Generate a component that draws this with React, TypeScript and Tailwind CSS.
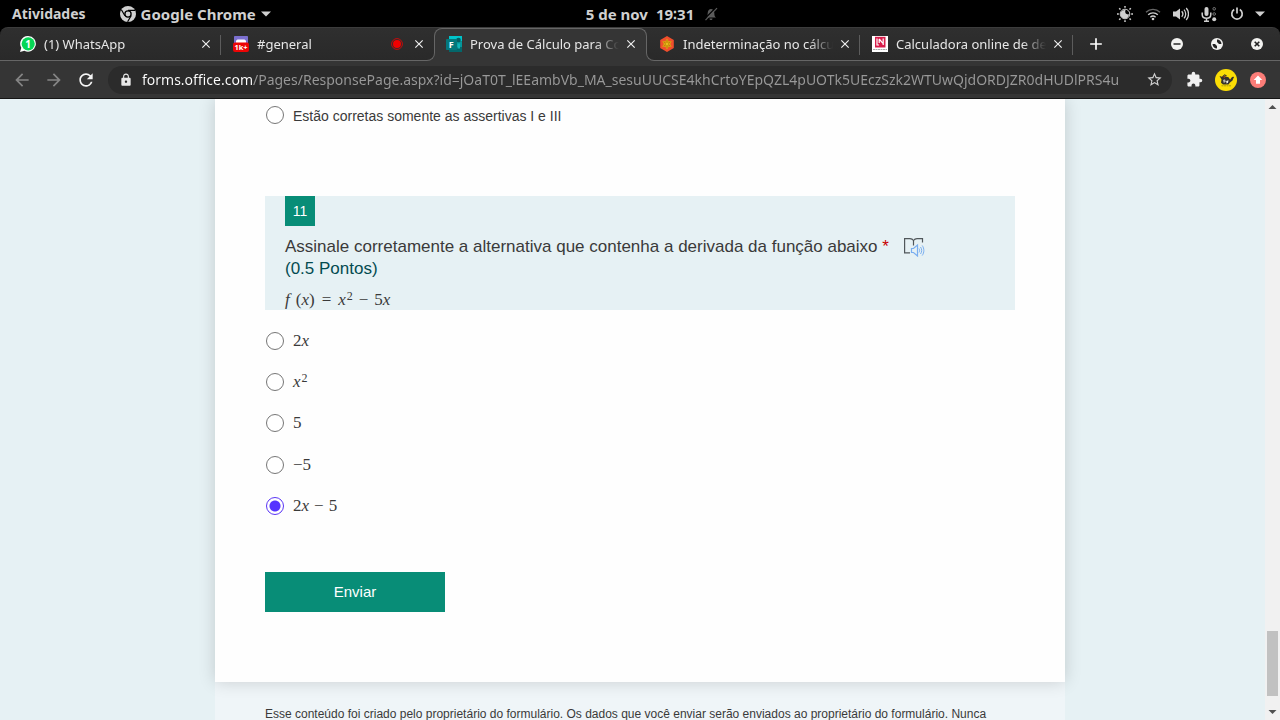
import React, { useState } from "react";
import {
  MdAdd,
  MdArrowBack,
  MdArrowForward,
  MdClose,
  MdExtension,
  MdLock,
  MdRefresh,
  MdStarBorder,
} from "react-icons/md";

const URL_TEXT =
  "forms.office.com/Pages/ResponsePage.aspx?id=jOaT0T_lEEambVb_MA_sesuUUCSE4khCrtoYEpQZL4pUOTk5UEczSzk2WTUwQjdORDJZR0dHUDlPRS4u";

function ChromeLogo() {
  return (
    <svg width="16" height="16" viewBox="0 0 16 16" aria-hidden="true">
      <circle cx="8" cy="8" r="8" fill="#d0d0d0" />
      <circle cx="8" cy="8" r="3.1" fill="#d0d0d0" stroke="#000" strokeWidth="1.3" />
      <path d="M8 4.4H15M4.9 9.8 1.4 3.8M11.1 9.8 7.6 15.8" stroke="#000" strokeWidth="1.2" fill="none" />
    </svg>
  );
}

function Caret() {
  return (
    <svg width="10" height="6" viewBox="0 0 10 6" aria-hidden="true">
      <path d="M0 0.5h10L5 5.5z" fill="#d0d0d0" />
    </svg>
  );
}

function BellOff() {
  return (
    <svg width="14" height="14" viewBox="0 0 14 14" aria-hidden="true">
      <path d="M2 10.5c1.5-1 1.6-2.5 1.7-4.5C3.9 3.5 5.3 2 7 2s3.2 1.5 3.3 4c.1 2 .2 3.5 1.7 4.500zM5.500 11.500h3c0 2-3 2-3 0z" fill="#5c5c5c" />
      <path d="M12.5 0 0 12.5" stroke="#000" strokeWidth="1.3" />
      <path d="M13 1.2 1.5 13.2" stroke="#5c5c5c" strokeWidth="1.2" />
    </svg>
  );
}

function NightLight() {
  return (
    <svg width="16" height="16" viewBox="0 0 16 16" fill="none" stroke="#d0d0d0" aria-hidden="true">
      <circle cx="8" cy="8" r="4.8" strokeWidth="1" />
      <path d="M8.500 4C7.500 7 9 8.800 12 8.300A4.300 4.300 0 1 1 8.500 4z" fill="#d0d0d0" stroke="none" />
      <path d="M8 0v1.800M8 14.200v1.800M0 8h1.800M14.200 8h1.800M2.200 2.200l1.300 1.300M12.500 12.500l1.300 1.300M2.200 13.800l1.300-1.300M12.500 3.500l1.300-1.300" strokeWidth="1.500" />
    </svg>
  );
}

function Wifi() {
  return (
    <svg width="16" height="16" viewBox="0 0 16 16" fill="none" aria-hidden="true">
      <path d="M1 6.200a10 10 0 0 1 14 0" stroke="#666" strokeWidth="1.300" />
      <path d="M3.200 8.800a7 7 0 0 1 9.600 0M5.400 11.200a4 4 0 0 1 5.200 0" stroke="#d0d0d0" strokeWidth="1.400" />
      <circle cx="8" cy="13" r="1.300" fill="#d0d0d0" />
    </svg>
  );
}

function Volume() {
  return (
    <svg width="16" height="16" viewBox="0 0 16 16" fill="none" aria-hidden="true">
      <path d="M0 5.500h3L7 2.500v11l-4-3H0z" fill="#d0d0d0" />
      <path d="M8.700 5.300a4 4 0 0 1 0 5.400M11 3.600a6.500 6.500 0 0 1 0 8.800M13.200 2a9 9 0 0 1 0 12" stroke="#d0d0d0" strokeWidth="1.300" />
    </svg>
  );
}

function Mic() {
  return (
    <svg width="16" height="16" viewBox="0 0 16 16" fill="none" stroke="#d0d0d0" aria-hidden="true">
      <rect x="3.500" y="1" width="4" height="9" rx="2" fill="#d0d0d0" stroke="none" />
      <path d="M1.200 6.500v2c0 5 8.600 5 8.600 0v-2M5.500 12v3M3 15.200h5" strokeWidth="1.500" />
      <circle cx="13.200" cy="2.800" r="1.300" stroke="#777" />
      <circle cx="13.200" cy="8" r="1.300" stroke="#777" />
      <circle cx="13.200" cy="13.200" r="2" fill="#d0d0d0" stroke="none" />
    </svg>
  );
}

function Power() {
  return (
    <svg width="16" height="16" viewBox="0 0 16 16" fill="none" stroke="#d0d0d0" strokeWidth="1.700" aria-hidden="true">
      <path d="M5.200 3.500a5.200 5.200 0 1 0 5.600 0M8 1.500v6" />
    </svg>
  );
}

function WhatsAppIcon() {
  return (
    <svg width="16" height="16" viewBox="0 0 16 16" aria-hidden="true">
      <path d="M8.200 0a7.800 7.800 0 1 1-3.800 14.700L0 16l1.300-4.200A7.800 7.800 0 0 1 8.200 0z" fill="#fff" />
      <circle cx="8.200" cy="7.800" r="6.600" fill="#06d755" />
      <text x="8" y="11.500" textAnchor="middle" fontSize="10" fontWeight="700" fontFamily="Noto Sans, sans-serif" fill="#fff">1</text>
    </svg>
  );
}

function ChannelIcon() {
  return (
    <svg width="16" height="16" viewBox="0 0 16 16" aria-hidden="true">
      <rect x="1" y="0" width="14" height="12" rx="0.800" fill="#7b6fce" />
      <path d="M3 7V4.800L4.500 3.500h7L13 4.800V7z" fill="#fff" />
      <rect x="0" y="6.500" width="16" height="9.500" rx="2" fill="#ec0505" />
      <text x="8" y="14" textAnchor="middle" fontSize="7.500" fontWeight="700" fontFamily="Noto Sans, sans-serif" fill="#fff">1k+</text>
    </svg>
  );
}

function FormsIcon() {
  return (
    <svg width="16" height="16" viewBox="0 0 16 16" aria-hidden="true">
      <path d="M3 0h13v5.500H3z" fill="#00c4ca" />
      <path d="M3 5.500h13V11H3z" fill="#03979b" />
      <path d="M3 11h13v5H3z" fill="#04676b" />
      <circle cx="12.500" cy="4" r="2.300" fill="#075d61" />
      <path d="M11.500 7.500H14v5h-2.500z" fill="#10b5b8" />
      <rect x="0" y="3" width="11" height="11" rx="0.800" fill="#03787c" />
      <text x="5.300" y="11.700" textAnchor="middle" fontSize="9" fontWeight="700" fontFamily="Noto Sans, sans-serif" fill="#fff">F</text>
    </svg>
  );
}

function HexIcon() {
  return (
    <svg width="16" height="16" viewBox="0 0 16 16" aria-hidden="true">
      <path d="M8 0l6.800 4v8L8 16l-6.800-4V4z" fill="#f04e2c" />
      <path d="M8 2.500l1.600 2.700 3.200 0L11.200 8l1.600 2.800H9.600L8 13.500l-1.600-2.700H3.200L4.800 8 3.200 5.200h3.200z" fill="#dba512" />
      <path d="M8 4v8M4.700 6l6.600 4M11.300 6l-6.600 4" stroke="#b97a08" strokeWidth="0.800" />
      <circle cx="8" cy="8" r="1.200" fill="#e6be1c" />
    </svg>
  );
}

function CalculatorIcon() {
  return (
    <svg width="16" height="16" viewBox="0 0 16 16" aria-hidden="true">
      <path d="M0 0h16v16H0z" fill="#fff" />
      <path d="M3 0.800h10.500v10.700H3z" fill="#d81d4b" />
      <path d="M5 2.500v6.500h2M7.200 3l3.500 4.200M7.200 3v4M11.200 2.500v6.500" fill="none" stroke="#fff" strokeWidth="1.200" />
      <path d="M1 13.500h14" stroke="#aaa" strokeWidth="1" strokeDasharray="2 0.500" />
    </svg>
  );
}

function AvatarIcon() {
  return (
    <svg width="22" height="22" viewBox="0 0 22 22" aria-hidden="true">
      <circle cx="11" cy="11" r="11" fill="#fbdd05" />
      <path d="M4.500 7l2.500.8L8.500 6l2 1.500 3 .8 1.500 2.200 4-2.700-1.500 3.700-2.500 2-1.500 2H8L6 13.800l.5-3.300z" fill="#35322c" />
      <path d="M9 5.800l2.500 1M16 9.800l2.500-1.800" stroke="#35322c" strokeWidth="1.200" />
      <path d="M8 11l2-.8.8 2.600-2 1.200z" fill="#b5b2a8" />
      <path d="M11.200 12l2.300-.8-.5 2.600-1.500.6z" fill="#efefe8" />
      <path d="M8.500 7.800l1.500.4" stroke="#d8431c" />
      <path d="M6.500 16.800h10" stroke="#a39410" strokeWidth="0.900" strokeDasharray="2 0.500" />
    </svg>
  );
}

function UpdateIcon() {
  return (
    <svg width="16" height="16" viewBox="0 0 16 16" aria-hidden="true">
      <circle cx="8" cy="8" r="8" fill="#fb7d78" />
      <path d="M8 3.500l4.300 4.500H10v3.700H6V8H3.700z" fill="#fff" />
    </svg>
  );
}

function ReaderIcon() {
  return (
    <svg width="21" height="19" viewBox="0 0 21 19" fill="none" aria-hidden="true">
      <path d="M9.500 7.500V2.500C8.500 1 7.500.6 6 .6H.6v14.200H6M9.500 2.500C10.500 1 11.500.6 13 .6h5.500v4" stroke="#50575a" strokeWidth="1.200" />
      <path d="M7.500 10.500h2l4-3.500v11l-4-3.500h-2z" stroke="#79aef0" strokeWidth="1.200" />
      <path d="M15 10.500c.8 1.200.8 2.800 0 4M16.500 9c1.600 2.200 1.600 4.800 0 7M18.200 7.500c2.200 3 2.200 7 0 10" stroke="#79aef0" strokeWidth="1" />
    </svg>
  );
}

type TabProps = { icon: React.ReactNode; title: string; active?: boolean; divider?: boolean; recording?: boolean };

function BrowserTab({ icon, title, active, divider, recording }: TabProps) {
  return (
    <div
      className={
        active
          ? "relative z-10 flex min-w-0 flex-[0_1_213px] items-center rounded-t-lg border border-b-0 border-[#666] bg-[#353535] pr-[7px] pb-[2px] pl-[11px]"
          : "relative flex min-w-0 flex-[0_1_213px] items-center border-b border-[#666] pr-[7px] pl-3"
      }
    >
      {active && (
        <>
          <span className="absolute bottom-0 -left-2 h-2 w-2 bg-[#353535]">
            <span className="block h-2 w-2 rounded-br-lg border-r border-b border-[#666] bg-[#2a2a2a]" />
          </span>
          <span className="absolute -right-2 bottom-0 h-2 w-2 bg-[#353535]">
            <span className="block h-2 w-2 rounded-bl-lg border-b border-l border-[#666] bg-[#2a2a2a]" />
          </span>
        </>
      )}
      <button type="button" className="flex min-w-0 flex-1 items-center gap-2 text-left">
        <span className="shrink-0">{icon}</span>
        <span className="mr-1 min-w-0 flex-1 overflow-hidden text-[13px] leading-5 whitespace-nowrap text-[#e6e6e6] [mask-image:linear-gradient(to_right,black_84%,transparent)]">
          {title}
        </span>
      </button>
      {recording && (
        <svg width="12" height="12" viewBox="0 0 12 12" className="mr-2 shrink-0" aria-hidden="true">
          <circle cx="6" cy="6" r="5.400" fill="none" stroke="#c80a0a" strokeWidth="1" />
          <circle cx="6" cy="6" r="4" fill="#f00000" />
        </svg>
      )}
      <button type="button" aria-label={"Fechar " + title} className="flex h-4 w-4 shrink-0 items-center justify-center text-[#f0f0f0]">
        <MdClose size={14} />
      </button>
      {divider && <span className="absolute top-[7px] right-0 h-5 w-px bg-[#5c5c5c]" />}
    </div>
  );
}

const V = ({ children }: { children: React.ReactNode }) => <i>{children}</i>;
const Sup = ({ children }: { children: React.ReactNode }) => (
  <span className="ml-px self-start text-xs leading-3">{children}</span>
);

const OPTIONS: { id: string; label: React.ReactNode }[] = [
  { id: "2x", label: <>2<V>x</V></> },
  { id: "x2", label: <><V>x</V><Sup>2</Sup></> },
  { id: "5", label: <>5</> },
  { id: "-5", label: <>−5</> },
  { id: "2x-5", label: <>2<V>x</V><span className="mx-[5px]">−</span>5</> },
];

const radioClass =
  "m-0 h-[18px] w-[18px] shrink-0 appearance-none rounded-full border border-[#767676] bg-white checked:border-[#5a35f5] checked:bg-[radial-gradient(circle,#5533ff_5px,#ffffff_6px)]";

export default function App() {
  const [answer, setAnswer] = useState("2x-5");
  return (
    <div className="flex h-screen flex-col overflow-hidden bg-black font-['Noto_Sans',sans-serif]">
      <header className="grid h-[27px] shrink-0 grid-cols-[1fr_auto_1fr] items-center text-[15px] leading-5 font-bold text-[#d0d0d0]">
        <div className="flex items-center pl-3">
          <button type="button" className="text-sm">Atividades</button>
          <button type="button" className="ml-[34px] flex items-center gap-[5px]">
            <ChromeLogo />
            Google Chrome
            <Caret />
          </button>
        </div>
        <button type="button" className="flex gap-2">
          <span>5 de nov</span>
          <span>19∶31</span>
        </button>
        <div className="flex items-center pr-[15px] pl-[10px]">
          <BellOff />
          <div className="ml-auto flex items-center gap-3">
            <NightLight />
            <Wifi />
            <Volume />
            <Mic />
            <Power />
          </div>
          <span className="ml-[10px]"><Caret /></span>
        </div>
      </header>

      <nav aria-label="Abas" className="flex h-[34px] shrink-0 rounded-t-lg border-t border-[#3c3c3c] bg-linear-to-b from-[#2f2f2f] to-[#292929]">
        <span className="w-2 border-b border-[#666]" />
        <BrowserTab icon={<WhatsAppIcon />} title="(1) WhatsApp" divider />
        <BrowserTab icon={<ChannelIcon />} title="#general" recording />
        <BrowserTab icon={<FormsIcon />} title="Prova de Cálculo para Co" active />
        <BrowserTab icon={<HexIcon />} title="Indeterminação no cálcul" divider />
        <BrowserTab icon={<CalculatorIcon />} title="Calculadora online de der" divider />
        <div className="flex min-w-[180px] flex-1 items-center border-b border-[#666] pr-[17px] pl-[13px]">
          <button type="button" aria-label="Nova aba" className="text-white"><MdAdd size={20} /></button>
          <div className="ml-auto flex gap-7">
            <button type="button" aria-label="Minimizar">
              <svg width="12" height="12" viewBox="0 0 12 12"><circle cx="6" cy="6" r="6" fill="#f2f2f0" /><path d="M2.500 6h7" stroke="#333" strokeWidth="1.600" /></svg>
            </button>
            <button type="button" aria-label="Maximizar">
              <svg width="12" height="12" viewBox="0 0 12 12"><circle cx="6" cy="6" r="6" fill="#f2f2f0" /><path d="M6 1.500C8.500 1.500 10.500 3.500 10.500 6H8L6 4zM6 10.500C3.500 10.500 1.500 8.500 1.500 6H4L6 8z" fill="#222" /></svg>
            </button>
            <button type="button" aria-label="Fechar">
              <svg width="12" height="12" viewBox="0 0 12 12"><circle cx="6" cy="6" r="6" fill="#f2f2f0" /><path d="M3.700 3.700l4.600 4.600M8.300 3.700l-4.600 4.600" stroke="#222" strokeWidth="1.600" /></svg>
            </button>
          </div>
        </div>
      </nav>

      <div className="flex h-[37px] shrink-0 items-center bg-[#353535] pr-[14px] pl-3">
        <div className="flex gap-3">
          <button type="button" aria-label="Voltar" className="text-[#858585]"><MdArrowBack size={20} /></button>
          <button type="button" aria-label="Avançar" className="text-[#858585]"><MdArrowForward size={20} /></button>
          <button type="button" aria-label="Recarregar" className="text-[#f4f4f4]"><MdRefresh size={20} /></button>
        </div>
        <div className="ml-3 flex h-7 min-w-0 flex-1 items-center rounded-full bg-[#2b2b2b] pr-[9px] pl-[11px]">
          <MdLock size={14} className="shrink-0 text-[#e8e8e8]" />
          <input
            aria-label="Barra de endereço"
            readOnly
            value={URL_TEXT}
            className="ml-[9px] h-6 min-w-0 flex-1 bg-[linear-gradient(to_right,#ffffff_111px,#999999_111px)] bg-clip-text text-sm text-transparent outline-none"
          />
          <button type="button" aria-label="Favoritar" className="ml-2 text-[#d0d0d0]"><MdStarBorder size={17} /></button>
        </div>
        <div className="ml-[14px] flex items-center">
          <button type="button" aria-label="Extensões" className="text-[#f0f0f0]"><MdExtension size={17} /></button>
          <button type="button" aria-label="Perfil" className="ml-3"><AvatarIcon /></button>
          <button type="button" aria-label="Atualizar" className="ml-[13px]"><UpdateIcon /></button>
        </div>
      </div>

      <div className="flex min-h-0 flex-1 border-t border-[#151515] bg-[#e6f1f4] font-['Liberation_Sans',Arial,sans-serif]">
        <main className="min-w-0 flex-1 overflow-hidden pl-[15px]">
          <div className="mx-auto max-w-[850px] bg-[#eff5f8] text-[#3a3a3a]">
            <form
              onSubmit={(e) => e.preventDefault()}
              className="bg-[#fefefe] px-[50px] pb-[70px] shadow-[0_0_16px_rgba(0,0,0,0.16)]"
            >
              <label className="flex h-8 items-center gap-[9px] pl-px text-sm">
                <input type="radio" name="q10" className={radioClass} />
                <span className="pt-[2px]">Estão corretas somente as assertivas I e III</span>
              </label>

              <fieldset className="mt-[65px]">
                <div className="h-[114px] bg-[#e6f1f4] px-5">
                  <div className="flex h-[30px] w-[30px] items-center justify-center bg-[#088d77] text-sm text-white">11</div>
                  <div className="mt-[10px] flex items-start text-[17px] leading-[22px]">
                    <h2>
                      Assinale corretamente a alternativa que contenha a derivada da função abaixo <span className="text-[#c80000]">*</span>
                      <span className="block text-[#034b50]">(0.5 Pontos)</span>
                    </h2>
                    <button type="button" aria-label="Leitura Avançada" className="mt-[2px] ml-[15px]"><ReaderIcon /></button>
                  </div>
                  <p className="mt-[10px] flex h-5 items-center font-['Liberation_Serif',serif] text-[17px] leading-5">
                    <V>f</V><span className="ml-[6px]">(</span><V>x</V><span>)</span>
                    <span className="mx-[7px]">=</span><V>x</V><Sup>2</Sup>
                    <span className="mx-[6px]">−</span>5<V>x</V>
                  </p>
                </div>
                <div className="mt-[10px] grid h-[207px] auto-rows-fr">
                  {OPTIONS.map((o) => (
                    <label key={o.id} className="flex items-center gap-[9px] pl-px">
                      <input
                        type="radio"
                        name="q11"
                        value={o.id}
                        checked={answer === o.id}
                        onChange={() => setAnswer(o.id)}
                        className={radioClass}
                      />
                      <span className="flex h-5 items-center font-['Liberation_Serif',serif] text-[17px] leading-5">{o.label}</span>
                    </label>
                  ))}
                </div>
              </fieldset>

              <button type="submit" className="mt-[45px] block h-10 w-[180px] bg-[#088d77] text-[15px] text-white">Enviar</button>
            </form>
            <p className="px-[50px] pt-6 pb-10 text-xs leading-4">
              Esse conteúdo foi criado pelo proprietário do formulário. Os dados que você enviar serão enviados ao proprietário do formulário. Nunca
              forneça sua senha.
            </p>
          </div>
        </main>
        <div className="flex w-[15px] shrink-0 flex-col items-center justify-between bg-[#f1f1f1]" aria-hidden="true">
          <svg width="15" height="17" viewBox="0 0 15 17"><path d="M3.500 10h8l-4-4z" fill="#505050" /></svg>
          <span className="mt-auto mb-[7px] h-[65px] w-[11px] bg-[#c1c1c1]" />
          <svg width="15" height="17" viewBox="0 0 15 17"><path d="M3.500 7h8l-4 4z" fill="#505050" /></svg>
        </div>
      </div>
    </div>
  );
}
